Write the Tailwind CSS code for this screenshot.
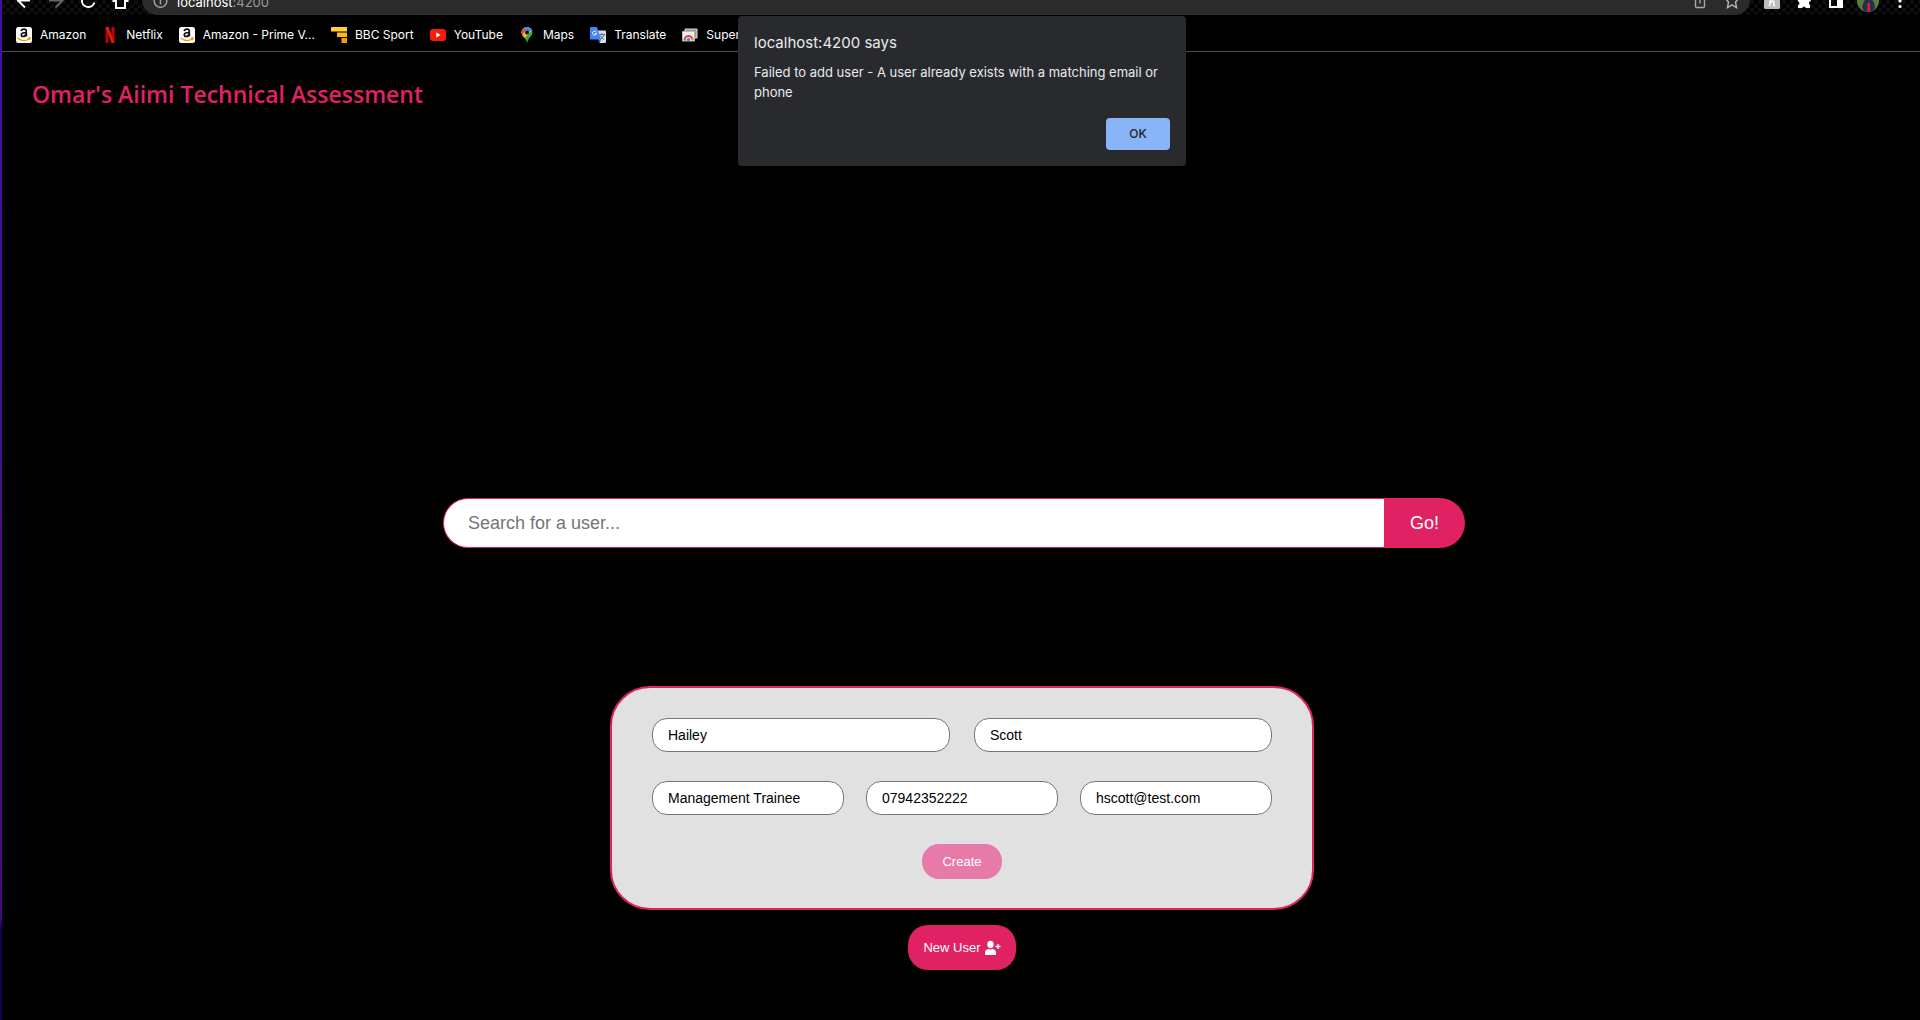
<!DOCTYPE html>
<html lang="en">
<head>
<meta charset="utf-8">
<title>Omar's Aiimi Technical Assessment</title>
<script src="https://cdn.jsdelivr.net/npm/@tailwindcss/browser@4"></script>
</head>
<body class="min-h-screen bg-black text-white font-['Liberation_Sans',Arial,sans-serif] flex">
<div class="w-[2px] shrink-0 bg-linear-to-b from-[#40129a] from-0% via-[#4b0782] via-90% to-[#17004a] to-91%"></div>
<div class="relative grow flex flex-col min-w-0">

  <header class="border-b border-[#4b4b4b] font-[Inter,sans-serif]">
    <!-- Toolbar -->
    <div class="h-[15px] overflow-hidden flex pl-3 pr-3 bg-[repeating-conic-gradient(#0e0e0e_0_25%,#000_0_50%)] bg-[length:8px_8px]">
      <button aria-label="Back" class="w-8 h-[15px]"><svg class="w-8 h-[15px]" viewBox="0 0 32 15" fill="none" stroke="#fff" stroke-width="2"><path d="M16 .5H3M11 7.500L4 .5l3-3"/></svg></button>
      <button aria-label="Forward" class="w-8 h-[15px]"><svg class="w-8 h-[15px]" viewBox="0 0 32 15" fill="none" stroke="#666" stroke-width="2"><path d="M3 .5h14M9.500 7.500l7-7-3-3"/></svg></button>
      <button aria-label="Reload" class="w-8 h-[15px]"><svg class="w-8 h-[15px]" viewBox="0 0 32 15" fill="none" stroke="#fff" stroke-width="2"><path d="M4 0a6.300 6.300 0 0 0 12.300 2.500"/></svg></button>
      <button aria-label="Home" class="w-8 h-[15px]"><svg class="w-8 h-[15px]" viewBox="0 0 32 15" fill="none" stroke="#fff" stroke-width="2"><path d="M2.500 1H6v7h9V1h3.500"/></svg></button>
      <div class="grow h-[15px] rounded-b-[15px] bg-[#2b2b2b] flex justify-between pl-[11px] pr-3">
        <div class="flex gap-[9px]">
          <svg class="w-[15px] h-[15px]" viewBox="0 0 15 15" fill="none" stroke="#9aa0a6" stroke-width="1.500"><circle cx="7.500" cy="1" r="6.300"/><path d="M7.500 0v4.500"/></svg>
          <span class="text-[13px] leading-[4px] text-white">localhost<span class="text-[#9a9a9a]">:4200</span></span>
        </div>
        <div class="flex gap-5">
          <svg class="w-3 h-[15px]" viewBox="0 0 12 15" fill="none" stroke="#a5a5a5" stroke-width="1.400"><path d="M1.500-1v7.500q0 1 1 1h7q1 0 1-1V-1M6-1v4.500"/></svg>
          <svg class="w-3 h-[15px]" viewBox="0 0 12 15" fill="none" stroke="#b5b5b5" stroke-width="1.400"><path d="M-.5-1L2.500 2 1.500 7.500 6 4.800l4.500 2.700L9.500 2l3-3"/></svg>
        </div>
      </div>
      <div class="flex h-[15px] pl-[14px] gap-4">
        <svg class="w-4 h-[15px]" viewBox="0 0 16 15"><rect y="-5" width="16" height="14" rx="1.500" fill="#bdbdbd"/><path d="M6.500-1L5.500 6M6 3q4-4 4 0-1 3 1 2.500" stroke="#fff" stroke-width="1.500" fill="none"/></svg>
        <svg class="w-4 h-[15px]" viewBox="0 0 16 15" fill="#fff"><path d="M1-1h13l1 2-2 1v2l1 1v3h-4q-2-3-4 0H2V5q3-1 0-4z"/></svg>
        <svg class="w-4 h-[15px]" viewBox="0 0 16 15"><path d="M2-4h12V7H2z" fill="none" stroke="#fff" stroke-width="2"/><path d="M9-1h5v8H9z" fill="#fff"/></svg>
        <svg class="w-4 h-[15px] overflow-visible" viewBox="0 0 16 15"><clipPath id="face"><circle cx="8" cy="1" r="11"/></clipPath><g clip-path="url(#face)"><path d="M-3-10h22v22H-3z" fill="#56803a"/><path d="M4 1l3-2h4l3 3 1 6-3 4H4L2 7z" fill="#25304c"/><path d="M7.500 3h2.500v9H7.500z" fill="#e02030"/></g></svg>
        <svg class="w-4 h-[15px]" viewBox="0 0 16 15" fill="#fff"><circle cx="8" cy="1" r="1.600"/><circle cx="8" cy="6.500" r="1.600"/></svg>
      </div>
    </div>
    <!-- Bookmarks -->
    <nav class="h-9 flex items-center gap-4 pl-[14px] pt-1 text-[12px] leading-4 whitespace-nowrap">
      <a href="#" class="flex items-center gap-2">
        <svg class="size-4" viewBox="0 0 16 16"><rect width="16" height="16" rx="2.500" fill="#fff"/><path d="M5.300 4.200Q5.500 2.200 8 2.200q2.300 0 2.300 2.300v3q0 1 .7 1.600M10 5.500q-4.700 0-4.700 2.300 0 1.700 1.800 1.700 2.400 0 2.900-2.500" fill="none" stroke="#111" stroke-width="1.700"/><path d="M1.500 11q6 4.800 12 .8M11.800 10.800h2.400l-.7 2.200" fill="none" stroke="#f90" stroke-width="1.300"/></svg>
        <span>Amazon</span></a>
      <a href="#" class="flex items-center gap-2">
        <svg class="size-4" viewBox="0 0 16 16"><path d="M3.500 0h3v16h-3zM9.500 0h3v16h-3z" fill="#b1060f"/><path d="M3.500 0h3l6 16h-3z" fill="#e8170c"/></svg>
        <span>Netflix</span></a>
      <a href="#" class="flex items-center gap-2">
        <svg class="size-4" viewBox="0 0 16 16"><rect width="16" height="16" rx="2.500" fill="#fff"/><path d="M5.300 4.200Q5.500 2.200 8 2.200q2.300 0 2.300 2.300v3q0 1 .7 1.600M10 5.500q-4.700 0-4.700 2.300 0 1.700 1.800 1.700 2.400 0 2.900-2.500" fill="none" stroke="#111" stroke-width="1.700"/><path d="M1.500 11q6 4.800 12 .8M11.800 10.800h2.400l-.7 2.200" fill="none" stroke="#f90" stroke-width="1.300"/></svg>
        <span>Amazon - Prime V...</span></a>
      <a href="#" class="flex items-center gap-2">
        <svg class="size-4" viewBox="0 0 16 16"><path d="M0 0h16v4.500H0z" fill="#ffd230"/><path d="M6 5.500h10V10H6z" fill="#fdb913"/><path d="M10.500 11H16v5h-5.500z" fill="#f5a000"/></svg>
        <span>BBC Sport</span></a>
      <a href="#" class="flex items-center gap-2">
        <svg class="size-4" viewBox="0 0 16 16"><rect y="2" width="16" height="12" rx="3" fill="#f61c0d"/><path d="M6.300 5.500v5l4.300-2.500z" fill="#fff"/></svg>
        <span>YouTube</span></a>
      <a href="#" class="flex items-center gap-2">
        <svg class="size-4" viewBox="0 0 16 16"><clipPath id="pin"><path d="M8 16Q7.500 13 5 10.300 2.500 8 2.500 5.500a5.500 5.500 0 0 1 11 0Q13.500 8 11 10.300 8.500 13 8 16z"/></clipPath><g clip-path="url(#pin)"><path d="M0 0h16v16H0z" fill="#34a853"/><path d="M0 0h16L4 13H0z" fill="#fbbc04"/><path d="M0 0h9L3 8 0 6z" fill="#ea4335"/><path d="M3 1l3-2h8v4L9 5z" fill="#4285f4"/></g><circle cx="8" cy="5.500" r="2" fill="#111"/></svg>
        <span>Maps</span></a>
      <a href="#" class="flex items-center gap-2">
        <svg class="size-4" viewBox="0 0 16 16"><path d="M6 3.500h9q1 0 1 1V15q0 1-1 1H9.500z" fill="#d8dce0"/><path d="M9.500 7.500H15M12 6v1.500M14 7.500Q13 11 10 12.500M10.500 8.500q1 2.500 3.500 4" stroke="#5d6f7c" fill="none"/><path d="M1 0h6l4 12.500H1q-1 0-1-1V1q0-1 1-1z" fill="#4285f4"/><path d="M6.300 5a2 2 0 1 0 .3 1.500H5" stroke="#fff" fill="none"/><path d="M8 12.500h3L9.500 16z" fill="#2a56c6"/></svg>
        <span>Translate</span></a>
      <a href="#" class="flex items-center gap-2">
        <svg class="size-4" viewBox="0 0 16 16"><path d="M3 2h12v9H3z" fill="#999" stroke="#ddd"/><path d="M.5 4.500h12V14H.5z" fill="#eee" stroke="#bbb"/><path d="M2.500 13a4 4 0 0 1 8 0" fill="none" stroke="#ea4335" stroke-width="2.200"/><path d="M1.500 13.500l1-3 2 3z" fill="#34a853"/><path d="M9 13.500l1-2.500 1.500 2.500z" fill="#fbbc04"/><circle cx="6.500" cy="12.500" r="1.700" fill="#4285f4"/></svg>
        <span>Super</span></a>
    </nav>
  </header>

  <div role="alertdialog" aria-labelledby="dlg-title" aria-describedby="dlg-text" class="absolute top-4 left-[calc(50%+1px)] -translate-x-1/2 w-[448px] rounded-[4px] bg-[#292a2d] p-4 text-[#e8eaed] font-[Inter,sans-serif] flex flex-col">
    <h2 id="dlg-title" class="text-[15px] leading-[22px]">localhost:4200 says</h2>
    <p id="dlg-text" class="mt-2 text-[13px] leading-5">Failed to add user - A user already exists with a matching email or phone</p>
    <button class="mt-4 self-end w-16 h-8 rounded-[4px] bg-[#8ab4f8] text-[#202124] text-[12px] font-medium">OK</button>
  </div>

  <main class="flex flex-col items-center pl-[2px]">
    <h1 class="self-start pt-7 px-7 font-['Trebuchet_MS','Open_Sans',sans-serif] text-[23px] leading-7 font-semibold text-[#e02264]">Omar's Aiimi Technical Assessment</h1>

    <div class="mt-[390px] w-full flex justify-center pr-4">
      <form class="flex w-full max-w-[1022px] h-[50px] text-[18px]">
        <input type="text" aria-label="Search for a user" placeholder="Search for a user..." class="grow min-w-0 rounded-l-[25px] border border-r-0 border-[#e02264] bg-white pl-6 text-black placeholder:text-[#757575] outline-none">
        <button type="button" class="w-[81px] rounded-r-[25px] bg-[#e02264] text-white">Go!</button>
      </form>
    </div>

    <form class="mt-[138px] w-full max-w-[704px] rounded-[40px] border-2 border-[#e02264] bg-[#e1e1e1] px-10 pt-[30px] pb-[29px] flex flex-col items-center gap-[29px] text-[14px] text-black">
      <div class="w-full grid grid-cols-2 gap-6">
        <input type="text" aria-label="First name" value="Hailey" class="min-w-0 h-[34px] rounded-[15px] border border-[#767676] bg-white px-[15px]">
        <input type="text" aria-label="Last name" value="Scott" class="min-w-0 h-[34px] rounded-[15px] border border-[#767676] bg-white px-[15px]">
      </div>
      <div class="w-full grid grid-cols-3 gap-[22px]">
        <input type="text" aria-label="Job title" value="Management Trainee" class="min-w-0 h-[34px] rounded-[15px] border border-[#767676] bg-white px-[15px]">
        <input type="tel" aria-label="Phone" value="07942352222" class="min-w-0 h-[34px] rounded-[15px] border border-[#767676] bg-white px-[15px]">
        <input type="email" aria-label="Email" value="hscott@test.com" class="min-w-0 h-[34px] rounded-[15px] border border-[#767676] bg-white px-[15px]">
      </div>
      <button type="button" class="w-20 h-[35px] rounded-[17px] bg-[#e87aaa] text-[13px] text-white">Create</button>
    </form>

    <button type="button" class="mt-[15px] w-[108px] h-[45px] rounded-[20px] bg-[#e02264] text-[13px] text-white flex items-center justify-center gap-1">
      <span>New User</span>
      <svg class="size-4" viewBox="0 0 16 16" fill="#fff"><ellipse cx="5.500" cy="4.500" rx="3.200" ry="3.700"/><path d="M0 15v-2q0-3.500 3.500-4 2 1 4 0 3.500.5 3.500 4v2z"/><path d="M10.500 6.500h5M13 4v5" stroke="#fff" stroke-width="1.300"/></svg>
    </button>
  </main>
</div>
</body>
</html>
